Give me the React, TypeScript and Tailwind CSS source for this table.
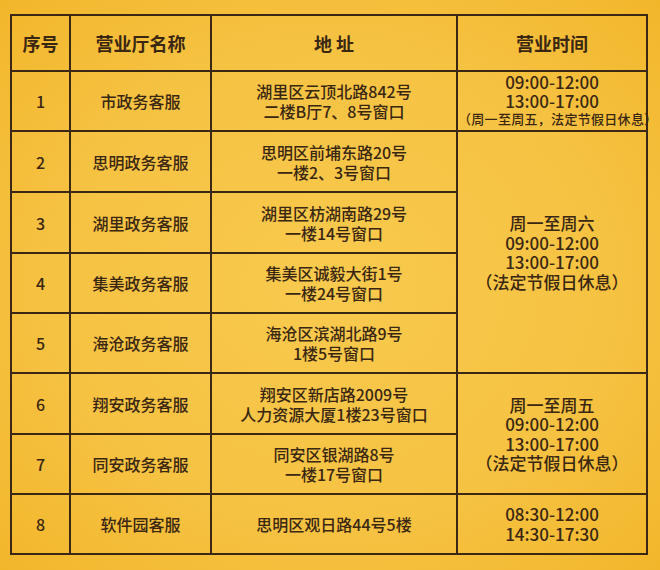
import React from "react";

const font = { fontFamily: '"Noto Sans CJK SC", "Noto Sans", sans-serif' };

const rows = [
  { n: "1", name: "市政务客服", addr: ["湖里区云顶北路842号", "二楼B厅7、8号窗口"], h: "h-[60px]" },
  { n: "2", name: "思明政务客服", addr: ["思明区前埔东路20号", "一楼2、3号窗口"], h: "h-[61px]" },
  { n: "3", name: "湖里政务客服", addr: ["湖里区枋湖南路29号", "一楼14号窗口"], h: "h-[61px]" },
  { n: "4", name: "集美政务客服", addr: ["集美区诚毅大街1号", "一楼24号窗口"], h: "h-[60px]" },
  { n: "5", name: "海沧政务客服", addr: ["海沧区滨湖北路9号", "1楼5号窗口"], h: "h-[60px]" },
  { n: "6", name: "翔安政务客服", addr: ["翔安区新店路2009号", "人力资源大厦1楼23号窗口"], h: "h-[61px]" },
  { n: "7", name: "同安政务客服", addr: ["同安区银湖路8号", "一楼17号窗口"], h: "h-[60px]" },
  { n: "8", name: "软件园客服", addr: ["思明区观日路44号5楼"], h: "h-[60px]" },
];

const td = "border-2 border-[#3a2814] text-center align-middle p-0";

export default function App() {
  return (
    <div
      className="w-[660px] h-[570px] bg-[radial-gradient(ellipse_at_center,#f8ca4e_0%,#f6c242_60%,#f2b62b_100%)] pt-[14px] pl-[10px] text-[#3a2712]"
      style={font}
    >
      <table className="border-collapse table-fixed w-[636px]">
        <colgroup>
          <col className="w-[59px]" />
          <col className="w-[141px]" />
          <col className="w-[246px]" />
          <col className="w-[190px]" />
        </colgroup>
        <thead>
          <tr className="h-[56px] text-[18px] font-bold">
            <td className={td}>序号</td>
            <td className={td}>营业厅名称</td>
            <td className={td}>地 址</td>
            <td className={td}>营业时间</td>
          </tr>
        </thead>
        <tbody className="text-[16px] font-medium leading-[20px]">
          {rows.map((r, i) => (
            <tr key={r.n} className={r.h}>
              <td className={td}>{r.n}</td>
              <td className={td}>{r.name}</td>
              <td className={td}>
                {r.addr.map((a) => (
                  <div key={a}>{a}</div>
                ))}
              </td>
              {i === 0 && (
                <td className={td}>
                  <div className="text-[17px] leading-[19px] -mt-[2px]">09:00-12:00</div>
                  <div className="text-[17px] leading-[19px]">13:00-17:00</div>
                  <div className="text-[13px] leading-[18px] tracking-[0.3px] whitespace-nowrap">（周一至周五，法定节假日休息）</div>
                </td>
              )}
              {i === 1 && (
                <td className={td} rowSpan={4}>
                  <div className="text-[17px] leading-[19.5px]">周一至周六</div>
                  <div className="text-[17px] leading-[19.5px]">09:00-12:00</div>
                  <div className="text-[17px] leading-[19.5px]">13:00-17:00</div>
                  <div className="text-[17px] leading-[19.5px]">（法定节假日休息）</div>
                </td>
              )}
              {i === 5 && (
                <td className={td} rowSpan={2}>
                  <div className="text-[17px] leading-[19.5px]">周一至周五</div>
                  <div className="text-[17px] leading-[19.5px]">09:00-12:00</div>
                  <div className="text-[17px] leading-[19.5px]">13:00-17:00</div>
                  <div className="text-[17px] leading-[19.5px]">（法定节假日休息）</div>
                </td>
              )}
              {i === 7 && (
                <td className={td}>
                  <div className="text-[17px] leading-[20px]">08:30-12:00</div>
                  <div className="text-[17px] leading-[20px]">14:30-17:30</div>
                </td>
              )}
            </tr>
          ))}
        </tbody>
      </table>
    </div>
  );
}
